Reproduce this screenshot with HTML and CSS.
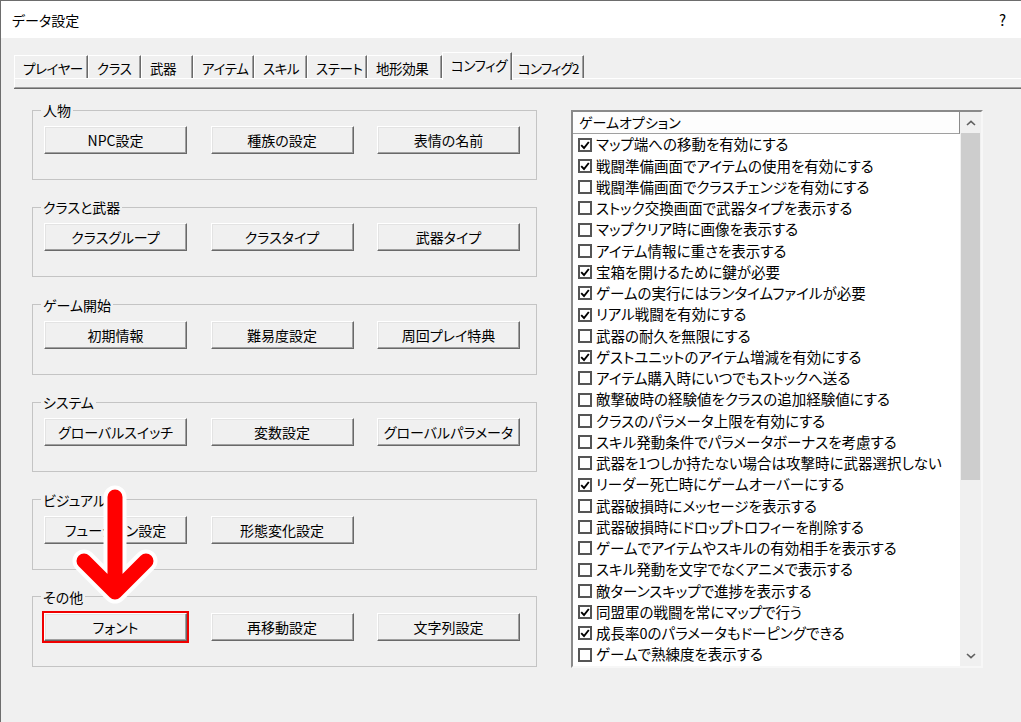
FILE: index.html
```html
<!DOCTYPE html>
<html lang="ja">
<head>
<meta charset="utf-8">
<title>データ設定</title>
<link rel="stylesheet" href="styles.css">
</head>
<body>
<div class="window">
  <div class="titlebar"><span class="title">データ設定</span><span class="help">?</span></div>
  <div class="tabs">
    <div class="tab t1">プレイヤー</div>
    <div class="tab t2">クラス</div>
    <div class="tab t3">武器</div>
    <div class="tab t4">アイテム</div>
    <div class="tab t5">スキル</div>
    <div class="tab t6">ステート</div>
    <div class="tab t7">地形効果</div>
    <div class="tab t8 active">コンフィグ</div>
    <div class="tab t9">コンフィグ2</div>
  </div>
  <div class="strip"></div>
  <div class="content">
    <div class="groups">
      <fieldset class="group">
        <legend>人物</legend>
        <div class="btns"><button class="btn">NPC設定</button><button class="btn">種族の設定</button><button class="btn">表情の名前</button></div>
      </fieldset>
      <fieldset class="group">
        <legend>クラスと武器</legend>
        <div class="btns"><button class="btn">クラスグループ</button><button class="btn">クラスタイプ</button><button class="btn">武器タイプ</button></div>
      </fieldset>
      <fieldset class="group">
        <legend>ゲーム開始</legend>
        <div class="btns"><button class="btn">初期情報</button><button class="btn">難易度設定</button><button class="btn">周回プレイ特典</button></div>
      </fieldset>
      <fieldset class="group">
        <legend>システム</legend>
        <div class="btns"><button class="btn">グローバルスイッチ</button><button class="btn">変数設定</button><button class="btn">グローバルパラメータ</button></div>
      </fieldset>
      <fieldset class="group">
        <legend>ビジュアル</legend>
        <div class="btns"><button class="btn">フュージョン設定</button><button class="btn">形態変化設定</button></div>
      </fieldset>
      <fieldset class="group">
        <legend>その他</legend>
        <div class="btns"><button class="btn marked">フォント</button><button class="btn">再移動設定</button><button class="btn">文字列設定</button></div>
      </fieldset>
    </div>
    <div class="listbox">
      <div class="list-main">
        <div class="list-header">ゲームオプション</div>
        <ul class="items">
          <li><span class="cb on"><svg viewBox="0 0 10 10"><path d="M1.2 5.2 L4 8 L8.8 2"/></svg></span>マップ端への移動を有効にする</li>
          <li><span class="cb on"><svg viewBox="0 0 10 10"><path d="M1.2 5.2 L4 8 L8.8 2"/></svg></span>戦闘準備画面でアイテムの使用を有効にする</li>
          <li><span class="cb"></span>戦闘準備画面でクラスチェンジを有効にする</li>
          <li><span class="cb"></span>ストック交換画面で武器タイプを表示する</li>
          <li><span class="cb"></span>マップクリア時に画像を表示する</li>
          <li><span class="cb"></span>アイテム情報に重さを表示する</li>
          <li><span class="cb on"><svg viewBox="0 0 10 10"><path d="M1.2 5.2 L4 8 L8.8 2"/></svg></span>宝箱を開けるために鍵が必要</li>
          <li><span class="cb on"><svg viewBox="0 0 10 10"><path d="M1.2 5.2 L4 8 L8.8 2"/></svg></span>ゲームの実行にはランタイムファイルが必要</li>
          <li><span class="cb on"><svg viewBox="0 0 10 10"><path d="M1.2 5.2 L4 8 L8.8 2"/></svg></span>リアル戦闘を有効にする</li>
          <li><span class="cb"></span>武器の耐久を無限にする</li>
          <li><span class="cb on"><svg viewBox="0 0 10 10"><path d="M1.2 5.2 L4 8 L8.8 2"/></svg></span>ゲストユニットのアイテム増減を有効にする</li>
          <li><span class="cb"></span>アイテム購入時にいつでもストックへ送る</li>
          <li><span class="cb"></span>敵撃破時の経験値をクラスの追加経験値にする</li>
          <li><span class="cb"></span>クラスのパラメータ上限を有効にする</li>
          <li><span class="cb"></span>スキル発動条件でパラメータボーナスを考慮する</li>
          <li><span class="cb"></span>武器を1つしか持たない場合は攻撃時に武器選択しない</li>
          <li><span class="cb on"><svg viewBox="0 0 10 10"><path d="M1.2 5.2 L4 8 L8.8 2"/></svg></span>リーダー死亡時にゲームオーバーにする</li>
          <li><span class="cb"></span>武器破損時にメッセージを表示する</li>
          <li><span class="cb"></span>武器破損時にドロップトロフィーを削除する</li>
          <li><span class="cb"></span>ゲームでアイテムやスキルの有効相手を表示する</li>
          <li><span class="cb"></span>スキル発動を文字でなくアニメで表示する</li>
          <li><span class="cb"></span>敵ターンスキップで進捗を表示する</li>
          <li><span class="cb on"><svg viewBox="0 0 10 10"><path d="M1.2 5.2 L4 8 L8.8 2"/></svg></span>同盟軍の戦闘を常にマップで行う</li>
          <li><span class="cb on"><svg viewBox="0 0 10 10"><path d="M1.2 5.2 L4 8 L8.8 2"/></svg></span>成長率0のパラメータもドーピングできる</li>
          <li><span class="cb"></span>ゲームで熟練度を表示する</li>
        </ul>
      </div>
      <div class="scrollbar">
        <div class="sb-arrow"><svg viewBox="0 0 10 6"><path d="M1 5 L5 1.3 L9 5"/></svg></div>
        <div class="sb-thumb"></div>
        <div class="sb-track"></div>
        <div class="sb-arrow"><svg viewBox="0 0 10 6"><path d="M1 1 L5 4.7 L9 1"/></svg></div>
      </div>
    </div>
  </div>
  <svg class="annot" width="1021" height="722" viewBox="0 0 1021 722">
    <g fill="none" stroke-linecap="round" stroke-linejoin="round">
      <path d="M115 497 V590 M84 561 L115 592 L146 561" stroke="#ffffff" stroke-width="23"/>
      <path d="M115 497 V590 M84 561 L115 592 L146 561" stroke="#ff0000" stroke-width="15"/>
    </g>
  </svg>
</div>
</body>
</html>
```

FILE: styles.css
```css
* { box-sizing: border-box; }
html, body { margin: 0; padding: 0; }
body {
  background: #f0f0f0;
  font-family: "Noto Sans CJK JP", "Noto Sans", sans-serif;
  font-size: 14px;
  font-feature-settings: "palt";
  color: #000;
}
.window {
  position: relative;
  width: 1021px;
  height: 722px;
  border-top: 1px solid #6d6d6d;
  border-left: 1px solid #6d6d6d;
  overflow: hidden;
}
.titlebar {
  height: 37px;
  background: #fff;
  display: flex;
  align-items: center;
  justify-content: space-between;
  padding: 0 15px 0 11px;
  font-size: 14px;
}
.help { font-size: 15px; }

.tabs {
  display: flex;
  align-items: flex-end;
  height: 26px;
  margin: 14px 0 0 13px;
}
.tab {
  height: 23px;
  padding: 2px 0 0 8px;
  line-height: 20px;
  font-size: 13.5px;
  letter-spacing: -0.4px;
  border-top: 1px solid #fff;
  border-left: 1px solid #fff;
  border-right: 1px solid #6a6a6a;
  box-shadow: inset -1px 0 0 #a0a0a0;
  white-space: nowrap;
  overflow: hidden;
}
.t1 { width: 74px; }
.t2 { width: 53px; }
.t3 { width: 52px; }
.t4 { width: 61px; }
.t5 { width: 53px; }
.t6 { width: 60px; }
.t7 { width: 75px; }
.t8 { width: 70px; }
.t9 { width: 72px; padding-left: 5px; letter-spacing: -0.8px; }
.tab.active {
  height: 28px;
  margin-bottom: -2px;
  position: relative;
  z-index: 1;
  background: #f0f0f0;
  padding-top: 1px;
  line-height: 22px;
}
.strip {
  height: 10px;
  margin-left: 13px;
  border-top: 1px solid #fff;
  border-left: 1px solid #fff;
  border-bottom: 1px solid #a0a0a0;
  box-shadow: 0 1px 0 #6a6a6a;
}

.content {
  display: flex;
  align-items: flex-start;
  margin-top: 14px;
  padding-left: 31px;
}
.groups { width: 505px; flex: none; }
.group {
  margin: 0 0 19.4px;
  padding: 8px 11px 25px;
  border: 1px solid #c4c4c4;
  min-width: 0;
}
.group legend {
  padding: 0 2px;
  margin-left: -3px;
  line-height: 16px;
  font-size: 14px;
}
.btns { display: flex; gap: 23.5px; }
.btn {
  width: 143px;
  height: 28px;
  padding: 0;
  font: inherit;
  font-size: 14px;
  font-feature-settings: "palt";
  color: #000;
  background: #f0f0f0;
  border: 1px solid;
  border-color: #fff #696969 #696969 #fff;
  box-shadow: inset -1px -1px 0 #a0a0a0, inset 1px 1px 0 #e3e3e3;
  white-space: nowrap;
}
.btn.marked {
  outline: 2px solid #f00000;
  outline-offset: 0;
}

.listbox {
  margin: 8px 0 0 34px;
  width: 412px;
  height: 558px;
  flex: none;
  display: flex;
  background: #fff;
  border: 2px solid;
  border-color: #8a8a8a #f7f7f7 #f7f7f7 #8a8a8a;
  overflow: hidden;
}
.list-main { flex: 1; min-width: 0; font-size: 14.5px; }
.list-header {
  height: 22px;
  padding-left: 6px;
  line-height: 20px;
  font-size: 14px;
  background: #fdfdfd;
  border-bottom: 1px solid #a0a0a0;
  border-right: 1px solid #8a8a8a;
  white-space: nowrap;
}
.items { list-style: none; margin: 0; padding: 0; }
.items li {
  height: 21.25px;
  display: flex;
  align-items: center;
  padding-left: 5px;
  white-space: nowrap;
  line-height: 1;
}
.cb {
  width: 14px;
  height: 14px;
  flex: none;
  margin-right: 4px;
  border: 2px solid #555;
  background: #fff;
  display: flex;
  align-items: center;
  justify-content: center;
}
.cb svg { width: 10px; height: 10px; }
.cb path { fill: none; stroke: #000; stroke-width: 1.9; }

.scrollbar {
  width: 21px;
  flex: none;
  background: #f0f0f0;
  display: flex;
  flex-direction: column;
}
.sb-arrow {
  height: 21px;
  flex: none;
  display: flex;
  align-items: center;
  justify-content: center;
}
.sb-arrow svg { width: 10px; height: 6px; }
.sb-arrow path { fill: none; stroke: #606060; stroke-width: 1.6; }
.sb-thumb { height: 347px; margin: 0 1px; background: #cdcdcd; flex: none; }
.sb-track { flex: 1; }

.annot {
  position: absolute;
  left: -1px;
  top: -1px;
  pointer-events: none;
}
```
